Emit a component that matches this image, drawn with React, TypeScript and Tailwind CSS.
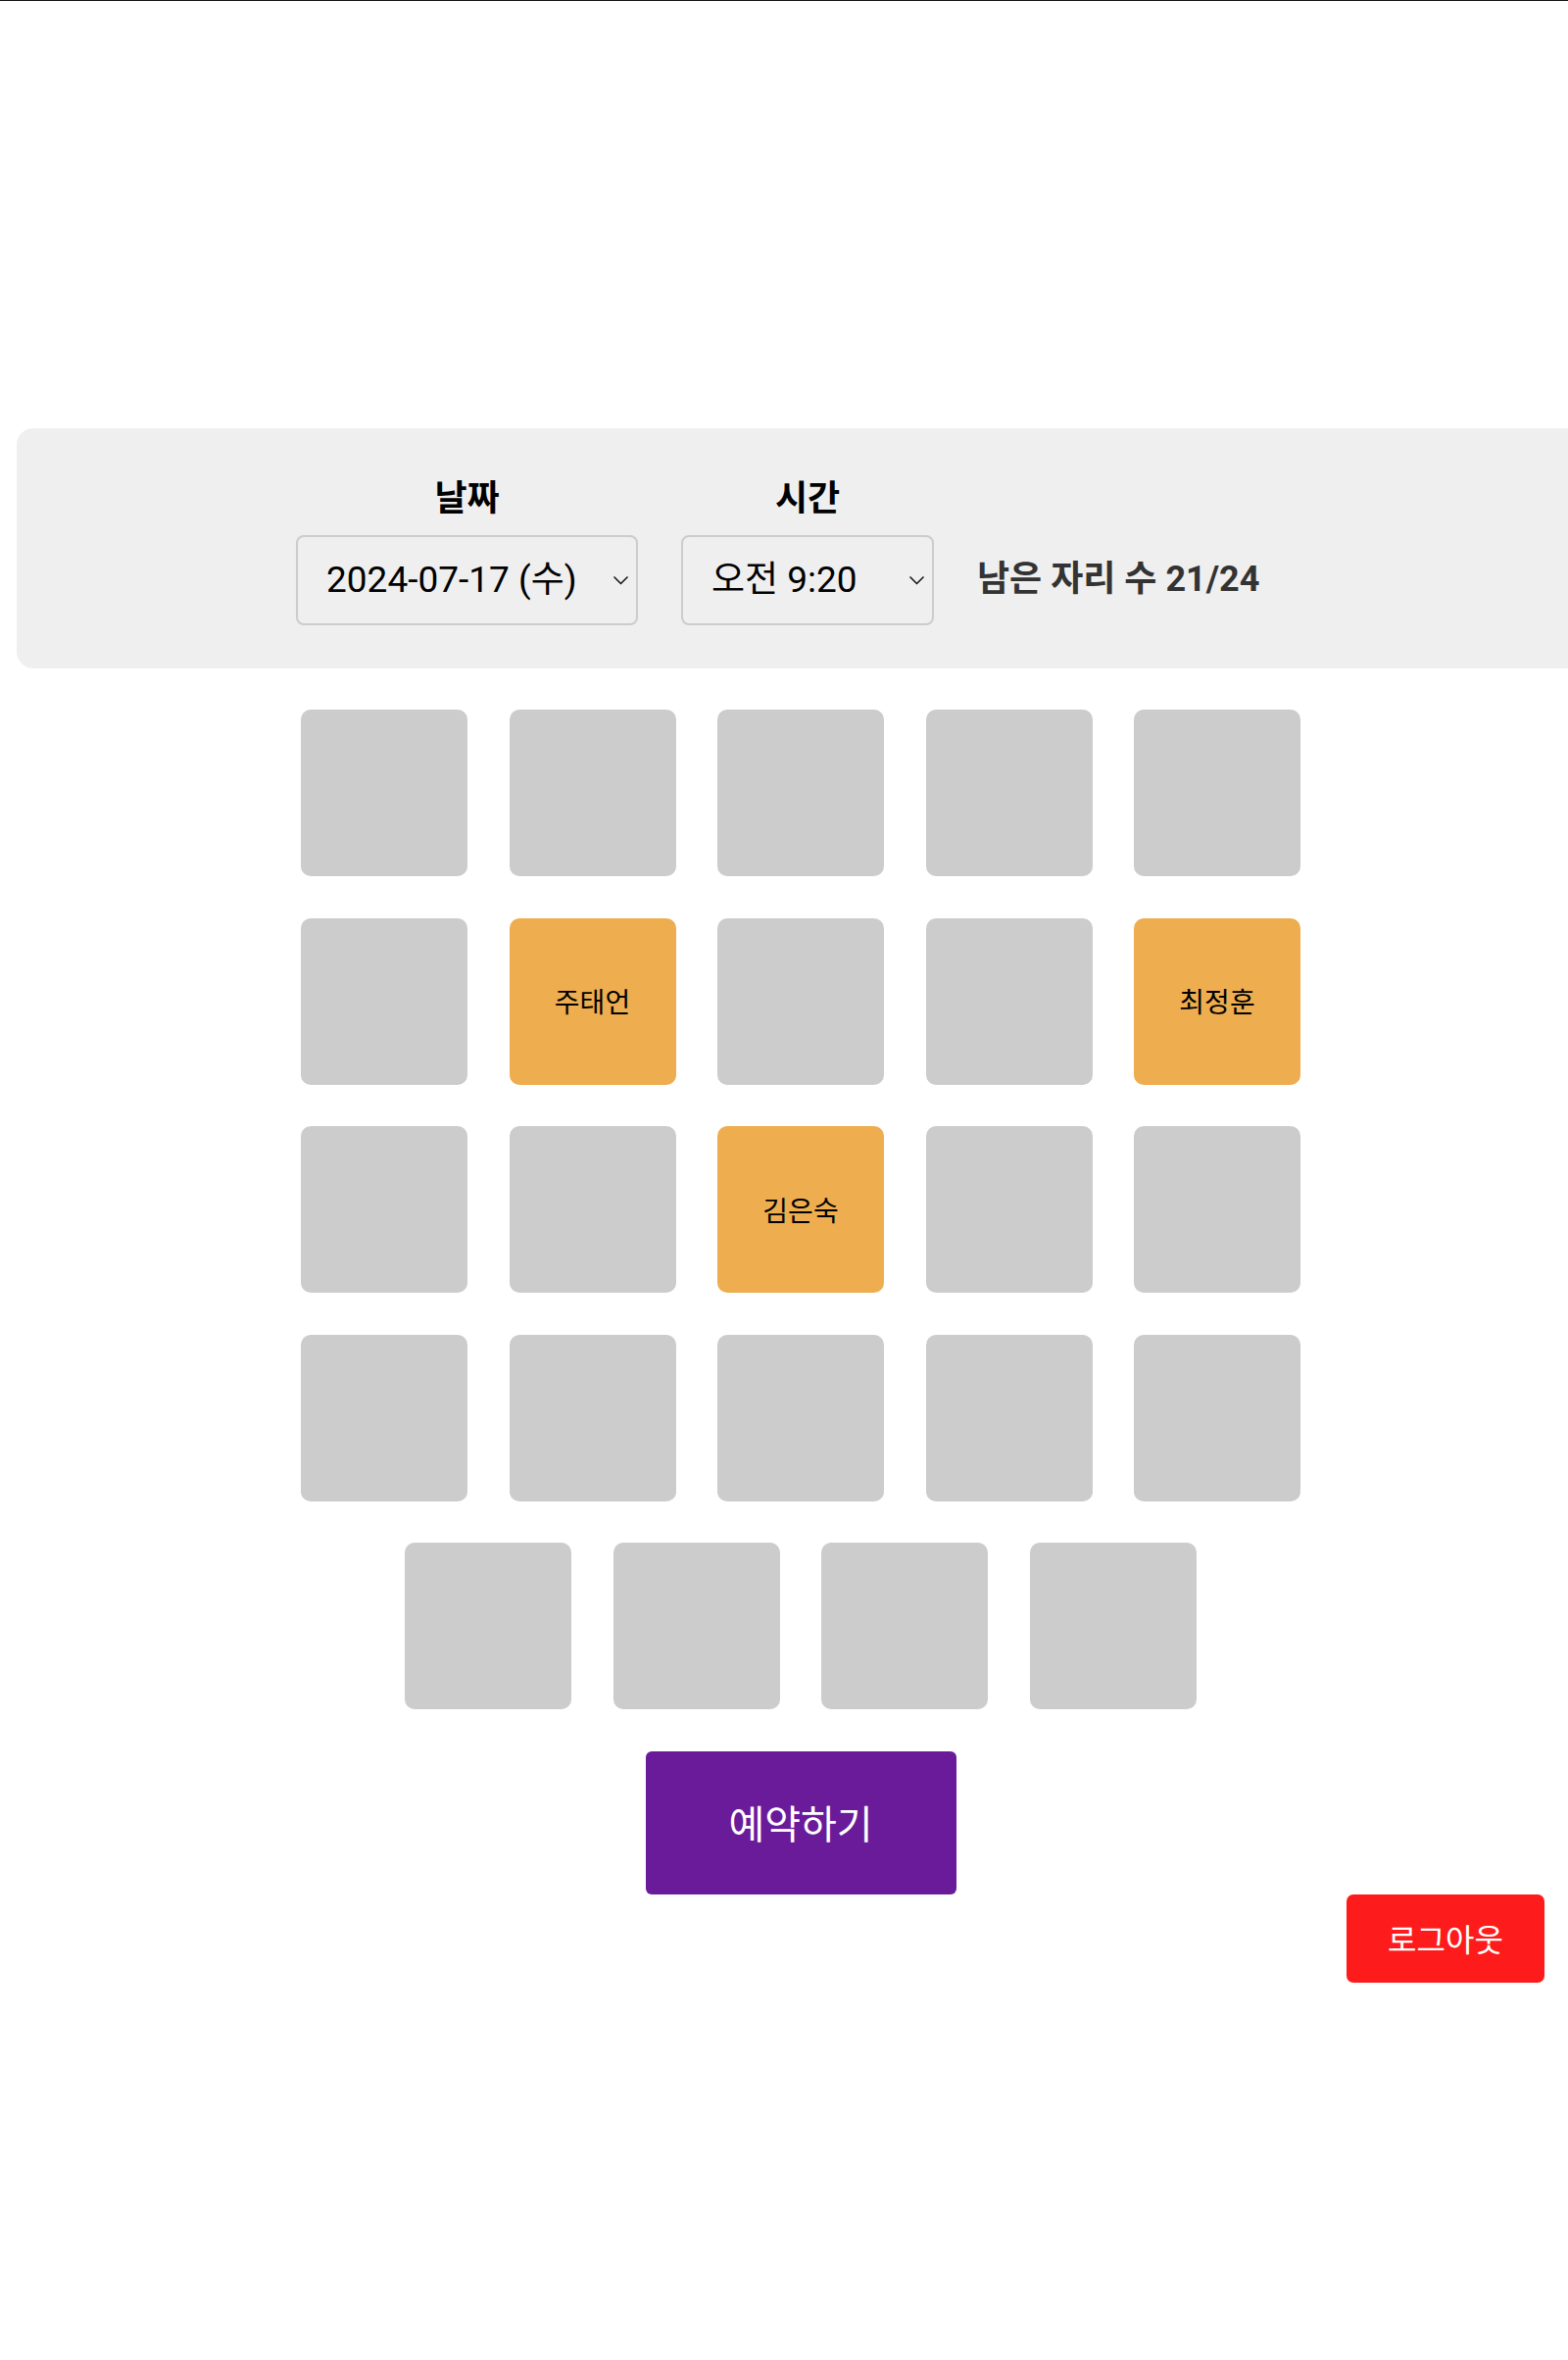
import { useState } from "react";

const FONT = "font-['Roboto','Noto_Sans_CJK_KR',sans-serif]";

const takenSeats: Record<number, string> = {
  6: "주태언",
  9: "최정훈",
  12: "김은숙",
};

function Chevron() {
  return (
    <svg
      className="pointer-events-none absolute right-[9px] top-1/2 -translate-y-1/2"
      width="17"
      height="10"
      viewBox="0 0 17 10"
      fill="none"
    >
      <path d="M1.5 1.5 L8.5 8.5 L15.5 1.5" stroke="#111" strokeWidth="1.5" />
    </svg>
  );
}

function Picker({
  label,
  value,
  options,
  width,
  onChange,
}: {
  label: string;
  value: string;
  options: string[];
  width: string;
  onChange: (v: string) => void;
}) {
  return (
    <div className="flex flex-col items-center">
      <div className="mb-[17px] text-[36px] font-bold leading-[40px] text-black">
        {label}
      </div>
      <div className={`relative ${width}`}>
        <select
          value={value}
          onChange={(e) => onChange(e.target.value)}
          className="h-[92px] w-full appearance-none rounded-[8px] border-2 border-[#cccccc] bg-[#efefef] pl-[29px] text-[37px] text-black outline-none"
        >
          {options.map((o) => (
            <option key={o}>{o}</option>
          ))}
        </select>
        <Chevron />
      </div>
    </div>
  );
}

export default function App() {
  const [date, setDate] = useState("2024-07-17 (수)");
  const [time, setTime] = useState("오전 9:20");

  return (
    <div className={`min-h-[2408px] w-[1600px] overflow-hidden bg-white ${FONT}`}>
      <div className="border-t border-[#111]" />

      <div className="ml-[17px] w-[1600px] pt-[436px]">
        {/* date / time bar */}
        <div className="flex h-[245px] items-start gap-[44px] rounded-[17px] bg-[#efefef] pl-[285px] pt-[52px]">
          <Picker
            label="날짜"
            value={date}
            options={["2024-07-17 (수)", "2024-07-18 (목)", "2024-07-19 (금)"]}
            width="w-[349px]"
            onChange={setDate}
          />
          <Picker
            label="시간"
            value={time}
            options={["오전 9:20", "오전 10:20", "오후 1:20"]}
            width="w-[258px]"
            onChange={setTime}
          />
          <div className="mb-[44px] flex h-[92px] items-center self-end pb-[2px] text-[36px] font-bold text-[#333]">
            남은 자리 수 21/24
          </div>
        </div>

        {/* seats */}
        <div className="mx-auto mt-[42px] flex w-[1020px] flex-wrap justify-center gap-[42.5px]">
          {Array.from({ length: 24 }, (_, i) => {
            const name = takenSeats[i];
            return (
              <div
                key={i}
                className={`flex h-[170px] w-[170px] items-center justify-center rounded-[10px] pt-[5px] text-[28px] text-black ${
                  name ? "bg-[#eead4e]" : "bg-[#cccccc]"
                }`}
              >
                {name}
              </div>
            );
          })}
        </div>

        <div className="mt-[43px] flex justify-center">
          <button className="h-[146px] w-[317px] rounded-[6px] bg-[#6a1b9a] pt-[6px] text-[40px] text-white">
            예약하기
          </button>
        </div>
      </div>

      <div className="flex justify-end pr-[24px]">
        <button className="h-[90px] w-[202px] rounded-[7px] bg-[#fe1b1b] pt-[4px] text-[32px] text-white">
          로그아웃
        </button>
      </div>
    </div>
  );
}
